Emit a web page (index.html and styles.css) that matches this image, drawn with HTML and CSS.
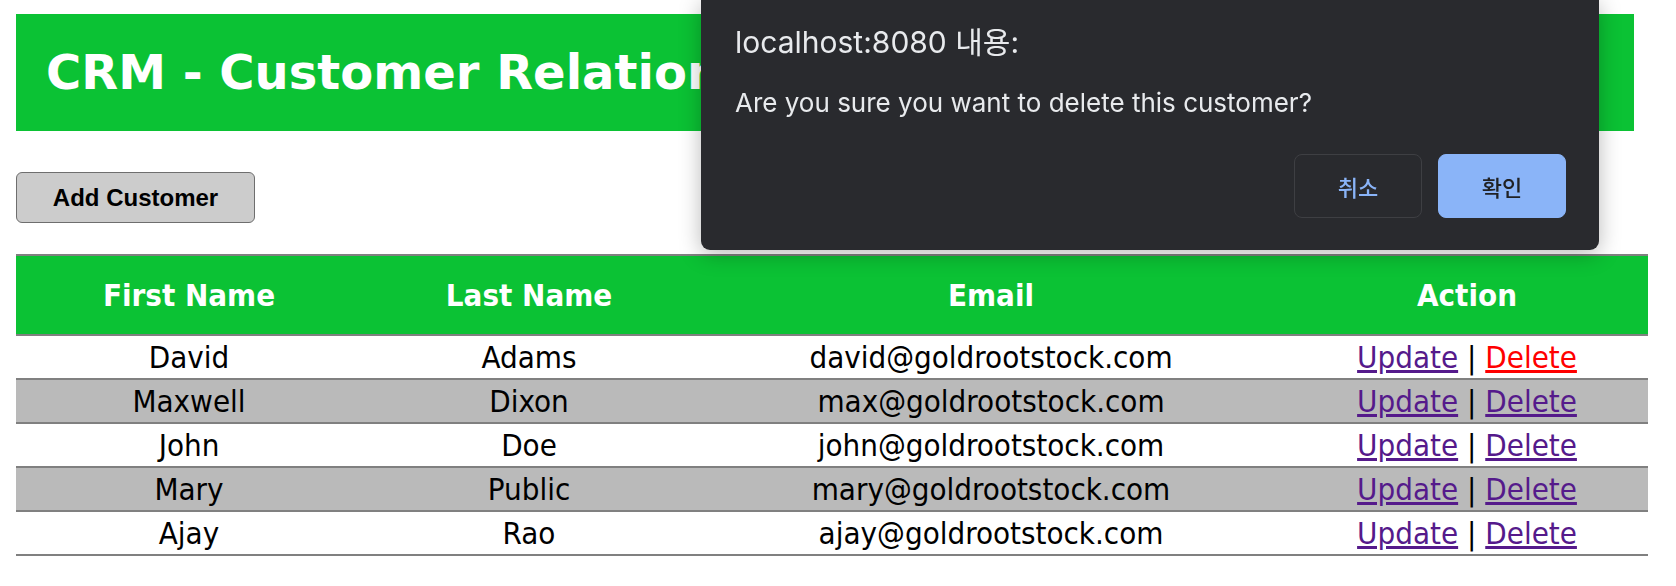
FILE: index.html
```html
<!DOCTYPE html>
<html lang="en">
<head>
<meta charset="utf-8">
<title>CRM - Customer Relationship Manager</title>
<link rel="stylesheet" href="styles.css">
</head>
<body>
<div class="page">
  <header class="banner">
    <h1 class="banner-title">CRM - Customer Relationship Manager</h1>
  </header>
  <div class="toolbar">
    <button class="btn-add" type="button">Add Customer</button>
  </div>
  <table class="customers">
    <colgroup>
      <col class="col-first">
      <col class="col-last">
      <col class="col-email">
      <col class="col-action">
    </colgroup>
    <thead>
      <tr><th>First Name</th><th>Last Name</th><th>Email</th><th>Action</th></tr>
    </thead>
    <tbody>
      <tr><td>David</td><td>Adams</td><td>david@goldrootstock.com</td><td><a class="link" href="#">Update</a> | <a class="link link-active" href="#">Delete</a></td></tr>
      <tr><td>Maxwell</td><td>Dixon</td><td>max@goldrootstock.com</td><td><a class="link" href="#">Update</a> | <a class="link" href="#">Delete</a></td></tr>
      <tr><td>John</td><td>Doe</td><td>john@goldrootstock.com</td><td><a class="link" href="#">Update</a> | <a class="link" href="#">Delete</a></td></tr>
      <tr><td>Mary</td><td>Public</td><td>mary@goldrootstock.com</td><td><a class="link" href="#">Update</a> | <a class="link" href="#">Delete</a></td></tr>
      <tr><td>Ajay</td><td>Rao</td><td>ajay@goldrootstock.com</td><td><a class="link" href="#">Update</a> | <a class="link" href="#">Delete</a></td></tr>
    </tbody>
  </table>
</div>

<div class="alert" role="alertdialog">
  <div class="alert-title">localhost:8080 내용:</div>
  <div class="alert-message">Are you sure you want to delete this customer?</div>
  <div class="alert-actions">
    <button class="alert-btn alert-cancel" type="button">취소</button>
    <button class="alert-btn alert-ok" type="button">확인</button>
  </div>
</div>
</body>
</html>
```

FILE: styles.css
```css
html, body {
  margin: 0;
  padding: 0;
  background: #ffffff;
}

.page {
  padding: 14px 0 0 16px;
}

.banner {
  width: 1618px;
  box-sizing: border-box;
  background: #0bc234;
  padding: 30px 30px 31px 30px;
}

.banner-title {
  margin: 0;
  font-family: "DejaVu Sans", Verdana, sans-serif;
  font-weight: bold;
  font-size: 48px;
  line-height: 56px;
  color: #ffffff;
  white-space: nowrap;
}

.toolbar {
  margin-top: 41px;
}

.btn-add {
  width: 239px;
  height: 51px;
  box-sizing: border-box;
  background: #cccccc;
  border: 1px solid #6e6e6e;
  border-radius: 6px;
  font-family: "Liberation Sans", Arial, sans-serif;
  font-weight: bold;
  font-size: 24px;
  color: #000000;
  padding: 0;
}

.customers {
  margin-top: 31px;
  width: 1632px;
  border-collapse: collapse;
  font-family: "DejaVu Sans Condensed", "DejaVu Sans", sans-serif;
  font-stretch: condensed;
  font-size: 31px;
  color: #000000;
}

.col-first { width: 346px; }
.col-last { width: 334px; }
.col-email { width: 590px; }
.col-action { width: 362px; }

.customers thead tr {
  background: #0bc234;
  border-top: 2px solid #808080;
  border-bottom: 2px solid #808080;
}

.customers th {
  height: 78px;
  padding: 0;
  font-weight: bold;
  font-size: 31px;
  color: #ffffff;
  text-align: center;
}

.customers td {
  height: 42px;
  padding: 0;
  line-height: 40px;
  text-align: center;
  border-bottom: 2px solid #808080;
}

.customers tbody tr:nth-child(even) {
  background: #bababa;
}

.link {
  color: #551a8b;
  text-decoration: underline;
}

.link-active {
  color: #ff0000;
}

.alert {
  position: fixed;
  top: 0;
  left: 701px;
  width: 898px;
  height: 250px;
  box-sizing: border-box;
  background: #292a2e;
  border-radius: 0 0 9px 9px;
  box-shadow: 0 4px 22px rgba(0, 0, 0, 0.28);
  padding: 24px 33px 32px 34px;
  display: flex;
  flex-direction: column;
  font-family: Inter, "Noto Sans CJK KR", sans-serif;
  color: #e8eaed;
}

.alert-title {
  font-size: 30px;
  line-height: 36px;
}

.alert-message {
  margin-top: 28px;
  font-size: 26px;
  line-height: 30px;
}

.alert-actions {
  margin-top: auto;
  display: flex;
  justify-content: flex-end;
  gap: 16px;
}

.alert-btn {
  width: 128px;
  height: 64px;
  box-sizing: border-box;
  border-radius: 8px;
  font-family: "Noto Sans CJK KR", sans-serif;
  font-size: 22px;
  font-weight: 500;
  padding: 0;
}

.alert-cancel {
  background: transparent;
  border: 1px solid #3e3f43;
  color: #8ab4f8;
}

.alert-ok {
  background: #8ab4f8;
  border: 1px solid #8ab4f8;
  color: #202124;
}
```
